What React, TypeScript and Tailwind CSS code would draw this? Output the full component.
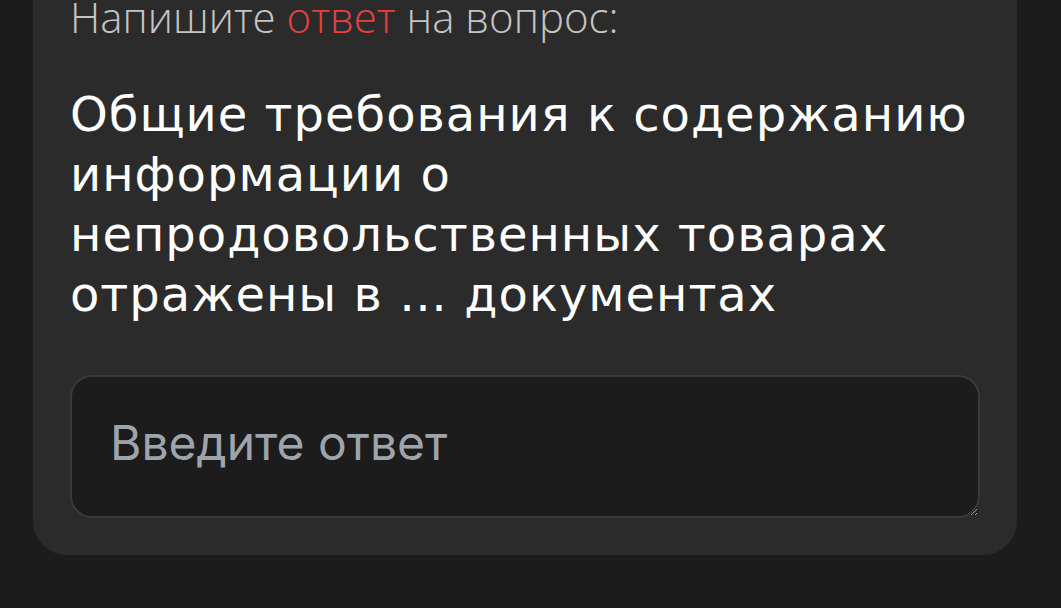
import React from 'react';

const QUESTION = 'Общие требования к содержанию информации о непродовольственных товарах отражены в … документах';

export default function App() {
  return (
    <div className="h-[608px] w-full overflow-hidden bg-[#1c1c1c]">
      <div className="ml-[33px] mt-[-36px] w-[984px] rounded-b-[34px] bg-[#2b2b2b] px-[37px] pb-[37px] pt-[30px]">
        <p className="text-[42px] font-light leading-[46px] text-[#c4c4c4] [font-family:'Open_Sans',sans-serif]">
          Напишите <span className="text-[#e8403f]">ответ</span> на вопрос:
        </p>
        <h2 className="mt-[44px] text-[48px] font-normal leading-[60px] tracking-[1px] text-white [font-family:'DejaVu_Sans',sans-serif]">
          {QUESTION}
        </h2>
        <textarea
          placeholder="Введите ответ"
          className="mt-[51px] block h-[143px] w-[910px] rounded-[22px] border-2 border-[#3a3a3a] bg-[#1c1c1c] px-[38px] py-[37px] text-[48px] leading-[58px] text-white outline-none placeholder:text-[#9ea4ab] [font-family:Inter,sans-serif]"
        />
      </div>
    </div>
  );
}
